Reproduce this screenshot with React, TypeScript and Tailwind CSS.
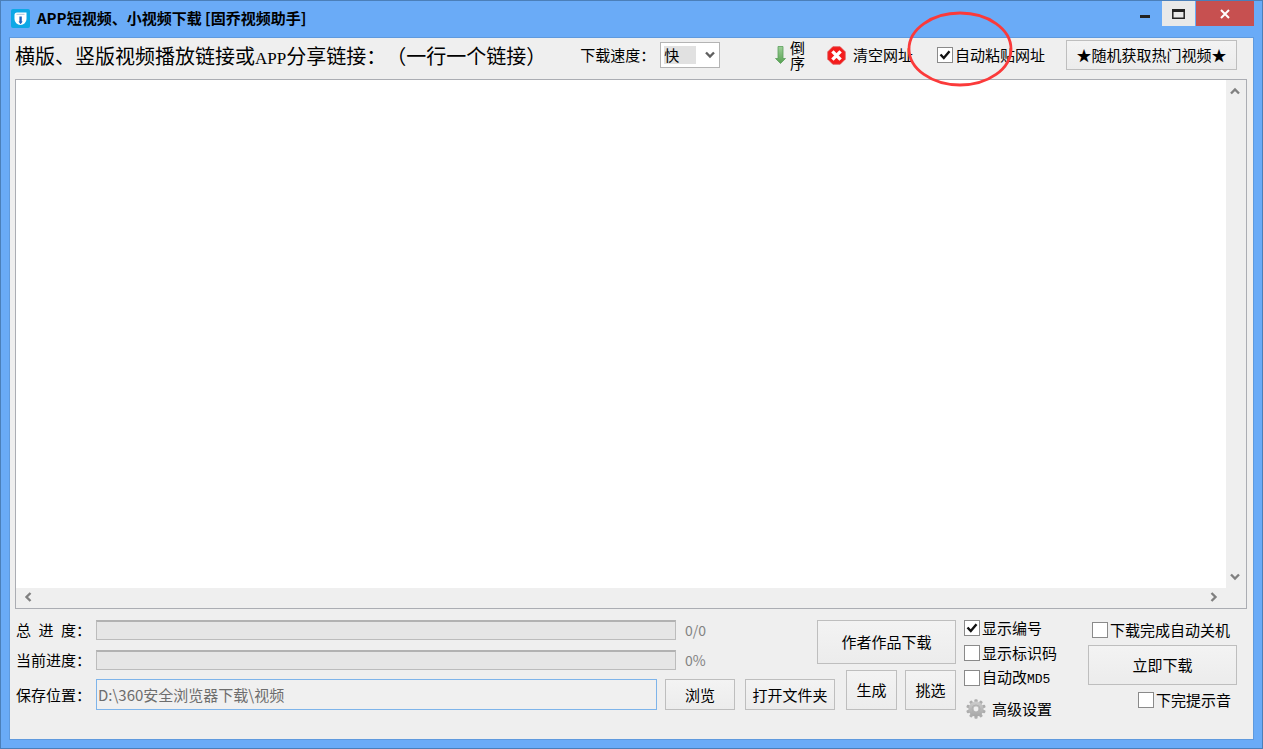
import { useState } from 'react';
import type { ButtonHTMLAttributes } from 'react';

function AppLogo() {
  return (
    <svg viewBox="0 0 19 19" className="h-[19px] w-[19px] shrink-0" aria-hidden="true">
      <rect width="19" height="19" rx="2" fill="#0da8e6" />
      <path d="M3.5 6Q3.5 3.5 6 3.5H15.5V10A6 6 0 0 1 3.5 10Z" fill="#fff" />
      <path d="M5.5 5.3h8" stroke="#a9c6dc" strokeWidth="1" />
      <path d="M8.4 7.5h2.4v5h.9L9.6 15.2l-2.1-2.7h.9Z" fill="#1f62bd" />
    </svg>
  );
}

function Chevron({ className = '' }: { className?: string }) {
  return (
    <svg viewBox="0 0 10 8" className={`h-2 w-2.5 shrink-0 ${className}`} aria-hidden="true">
      <path d="M1 1.5 5 5.5 9 1.5" fill="none" stroke="currentColor" strokeWidth="2.4" />
    </svg>
  );
}

function GearIcon() {
  return (
    <svg viewBox="-10 -10 20 20" className="h-5 w-5 shrink-0" aria-hidden="true">
      <defs>
        <linearGradient id="gear" x1="0" y1="0" x2="0" y2="1">
          <stop offset="0" stopColor="#cdcdcd" />
          <stop offset="1" stopColor="#a6a6a6" />
        </linearGradient>
      </defs>
      {[0, 36, 72, 108, 144].map((angle) => (
        <rect
          key={angle}
          x="-1.6"
          y="-9.8"
          width="3.2"
          height="19.6"
          rx="1"
          fill="#adadad"
          transform={`rotate(${angle})`}
        />
      ))}
      <circle r="7.6" fill="url(#gear)" />
      <circle r="4" fill="none" stroke="#b0b0b0" strokeWidth="1" />
      <circle r="2.4" fill="#efefef" />
    </svg>
  );
}

function PushButton({ className = '', ...props }: ButtonHTMLAttributes<HTMLButtonElement>) {
  return (
    <button
      type="button"
      className={`shrink-0 border border-[#bebebe] bg-linear-to-b from-[#f3f3f3] to-[#ececec] whitespace-nowrap ${className}`}
      {...props}
    />
  );
}

function CheckBox({
  id,
  label,
  suffix,
  defaultChecked = false,
}: {
  id: string;
  label: string;
  suffix?: string;
  defaultChecked?: boolean;
}) {
  return (
    <div className="flex h-5 shrink-0 items-center gap-0.5 whitespace-nowrap">
      <span className="grid h-4 w-4 shrink-0">
        <input
          id={id}
          type="checkbox"
          defaultChecked={defaultChecked}
          className="peer col-start-1 row-start-1 h-4 w-4 appearance-none border border-[#8a8a8a] bg-white"
        />
        <svg
          viewBox="0 0 16 16"
          className="pointer-events-none invisible col-start-1 row-start-1 h-4 w-4 peer-checked:visible"
          aria-hidden="true"
        >
          <path d="M3.5 7.5 6.8 11 12.5 4.2" fill="none" stroke="#111" strokeWidth="2.4" />
        </svg>
      </span>
      <label htmlFor={id}>
        {label}
        {suffix && <span className="font-['Liberation_Mono',monospace] text-[13px]">{suffix}</span>}
      </label>
    </div>
  );
}

function ProgressRow({ label, value, percent }: { label: string; value: string; percent: number }) {
  return (
    <div className="flex h-5 items-center">
      <span className="w-20 shrink-0 whitespace-pre">{label}</span>
      <div
        role="progressbar"
        aria-label={label}
        aria-valuenow={percent}
        className="h-5 flex-1 border border-t-2 border-[#bcbcbc] border-t-[#b2b2b2] bg-[#e6e6e6]"
      >
        <div className="h-full bg-[#06b025]" style={{ width: `${percent}%` }} />
      </div>
      <span className="w-[141px] shrink-0 pl-[9px] text-sm text-[#838383]">{value}</span>
    </div>
  );
}

function TitleBar() {
  return (
    <header className="flex h-9 items-start">
      <div className="flex h-[34px] flex-1 items-center gap-[7px] pl-0.5">
        <AppLogo />
        <h1 className="text-[15px] font-bold whitespace-nowrap">
          APP短视频、小视频下载 [固乔视频助手]
        </h1>
      </div>
      <div className="flex h-[25px]">
        <button type="button" aria-label="最小化" className="flex w-[35px] items-center justify-center">
          <svg viewBox="0 0 10 10" className="h-2.5 w-2.5">
            <path d="M0 7.5h10" stroke="#222" strokeWidth="3" />
          </svg>
        </button>
        <button
          type="button"
          aria-label="最大化"
          className="flex w-[33px] items-center justify-center bg-[#e9e9e9]"
        >
          <svg viewBox="0 0 13 10" className="h-2.5 w-[13px]">
            <path d="M.8 1.5h11.4V9.2H.8Z" fill="none" stroke="#222" strokeWidth="1.5" />
            <path d="M0 1.5h13" stroke="#222" strokeWidth="3" />
          </svg>
        </button>
        <button
          type="button"
          aria-label="关闭"
          className="ml-px flex w-[58px] items-center justify-center bg-[#c75050]"
        >
          <svg viewBox="0 0 10 10" className="h-2.5 w-2.5">
            <path d="M1 1l8 8M9 1 1 9" stroke="#fff" strokeWidth="2" />
          </svg>
        </button>
      </div>
    </header>
  );
}

function Toolbar() {
  return (
    <div className="flex h-[41px] items-center pr-4 pb-[7px] pl-[5px]">
      <label htmlFor="links" className="shrink-0 pt-1 text-xl leading-7 whitespace-nowrap">
        横版、竖版视频播放链接或
        <span className="font-['Liberation_Serif',serif] text-[17px]">APP</span>
        分享链接：（一行一个链接）
      </label>

      <div className="ml-[34px] flex items-center gap-[5px]">
        <label htmlFor="speed" className="whitespace-nowrap">
          下载速度：
        </label>
        <div className="flex h-[26px] w-[60px] items-center border border-[#b4b4b4] bg-white pl-[3px] text-[#606060]">
          <select
            id="speed"
            className="h-[18px] w-8 appearance-none bg-[#e1e1e1] leading-[18px] text-black"
            defaultValue="快"
          >
            <option>快</option>
            <option>中</option>
            <option>慢</option>
          </select>
          <Chevron className="ml-[9px]" />
        </div>
      </div>

      <div className="ml-auto flex items-center">
        <button type="button" className="flex items-center gap-1">
          <svg viewBox="0 0 11 20" className="h-5 w-[11px]" aria-hidden="true">
            <defs>
              <linearGradient id="arrow" x1="0" y1="0" x2="0" y2="1">
                <stop offset="0" stopColor="#9ccf97" />
                <stop offset="1" stopColor="#57a152" />
              </linearGradient>
            </defs>
            <path
              d="M3 1.5h5v12h2.5L5.5 18.5 .5 13.5H3Z"
              fill="url(#arrow)"
              stroke="#5c9f5c"
              strokeWidth="0.8"
            />
          </svg>
          <span className="w-[15px] leading-[15px]">倒序</span>
        </button>
        <button type="button" className="ml-[22px] flex items-center gap-[7px] whitespace-nowrap">
          <svg viewBox="0 0 19 19" className="h-[19px] w-[19px]" aria-hidden="true">
            <path
              d="M5.8.8h7.4l5 5v7.4l-5 5H5.8l-5-5V5.8Z"
              fill="#f41c1c"
              stroke="#e04a4a"
              strokeWidth="0.8"
            />
            <path d="M5.4 5.4l8.2 8.2M13.6 5.4l-8.2 8.2" stroke="#fff" strokeWidth="3.4" />
          </svg>
          清空网址
        </button>
        <div className="relative ml-6">
          <CheckBox id="auto-paste" label="自动粘贴网址" defaultChecked />
          <svg
            viewBox="0 0 106 76"
            className="pointer-events-none absolute -top-[34px] -left-[30px] z-10 h-[76px] w-[106px]"
            aria-hidden="true"
          >
            <ellipse cx="53" cy="38" rx="51" ry="36" fill="none" stroke="#fb3a3a" strokeWidth="2.8" />
          </svg>
        </div>
      </div>

      <PushButton className="ml-[21px] h-[30px] w-[171px]">★随机获取热门视频★</PushButton>
    </div>
  );
}

function LinkBox() {
  const [links, setLinks] = useState('');

  return (
    <div className="mr-1.5 ml-[5px] grid flex-1 grid-cols-[1fr_20px] grid-rows-[1fr_20px] border border-[#abadb3] bg-[#efefef] text-[#808080]">
      <textarea
        id="links"
        value={links}
        onChange={(e) => setLinks(e.target.value)}
        className="resize-none bg-white p-1 text-black outline-none"
      />
      <div className="flex flex-col items-center justify-between py-[7px] pr-0.5">
        <Chevron className="rotate-180" />
        <Chevron />
      </div>
      <div className="flex items-center justify-between px-[7px] pb-0.5">
        <Chevron className="rotate-90" />
        <Chevron className="-rotate-90" />
      </div>
    </div>
  );
}

function BottomPanel() {
  return (
    <div className="flex h-[130px] shrink-0 items-start pt-[11px] pr-4 pl-1.5">
      <div className="flex-1">
        <div className="flex h-[50px] items-start">
          <div className="flex flex-1 flex-col gap-2.5">
            <ProgressRow label={'总\u2002进\u2002度：'} value="0/0" percent={0} />
            <ProgressRow label="当前进度：" value="0%" percent={0} />
          </div>
          <PushButton className="h-11 w-[139px]">作者作品下载</PushButton>
        </div>
        <div className="flex items-end">
          <label htmlFor="save-path" className="w-20 shrink-0 leading-[31px]">
            保存位置：
          </label>
          <input
            id="save-path"
            readOnly
            value="D:\360安全浏览器下载\视频"
            className="h-[31px] min-w-0 flex-1 border border-[#7eb4ea] bg-[#f0f0f0] pl-px text-[#6d6d6d] outline-none"
          />
          <PushButton className="ml-2 h-[31px] w-[70px]">浏览</PushButton>
          <PushButton className="ml-2.5 h-[31px] w-[90px]">打开文件夹</PushButton>
          <PushButton className="ml-[11px] h-10 w-[51px]">生成</PushButton>
          <PushButton className="ml-2 h-10 w-[51px]">挑选</PushButton>
        </div>
      </div>

      <div className="-mt-0.5 ml-2 flex w-[94px] shrink-0 flex-col">
        <div className="flex flex-col gap-[5px]">
          <CheckBox id="show-number" label="显示编号" defaultChecked />
          <CheckBox id="show-code" label="显示标识码" />
          <CheckBox id="auto-md5" label="自动改" suffix="MD5" />
        </div>
        <button type="button" className="mt-2.5 flex items-center gap-1.5 pl-0.5 whitespace-nowrap">
          <GearIcon />
          高级设置
        </button>
      </div>

      <div className="ml-[30px] flex w-[149px] shrink-0 flex-col items-end">
        <div className="h-[25px] pr-[7px]">
          <CheckBox id="shutdown" label="下载完成自动关机" />
        </div>
        <PushButton className="h-10 w-full">立即下载</PushButton>
        <div className="pt-[5px] pr-1.5">
          <CheckBox id="sound" label="下完提示音" />
        </div>
      </div>
    </div>
  );
}

export default function App() {
  return (
    <div className="flex min-h-screen flex-col border border-[#4b7fb9] bg-[#6aabf7] px-2 pb-2 font-['Noto_Sans_CJK_SC',sans-serif] text-[15px] leading-[22px] text-black [text-spacing-trim:space-all]">
      <TitleBar />
      <main className="flex flex-1 flex-col border border-[#5f9ade] bg-[#efefef]">
        <Toolbar />
        <LinkBox />
        <BottomPanel />
      </main>
    </div>
  );
}
